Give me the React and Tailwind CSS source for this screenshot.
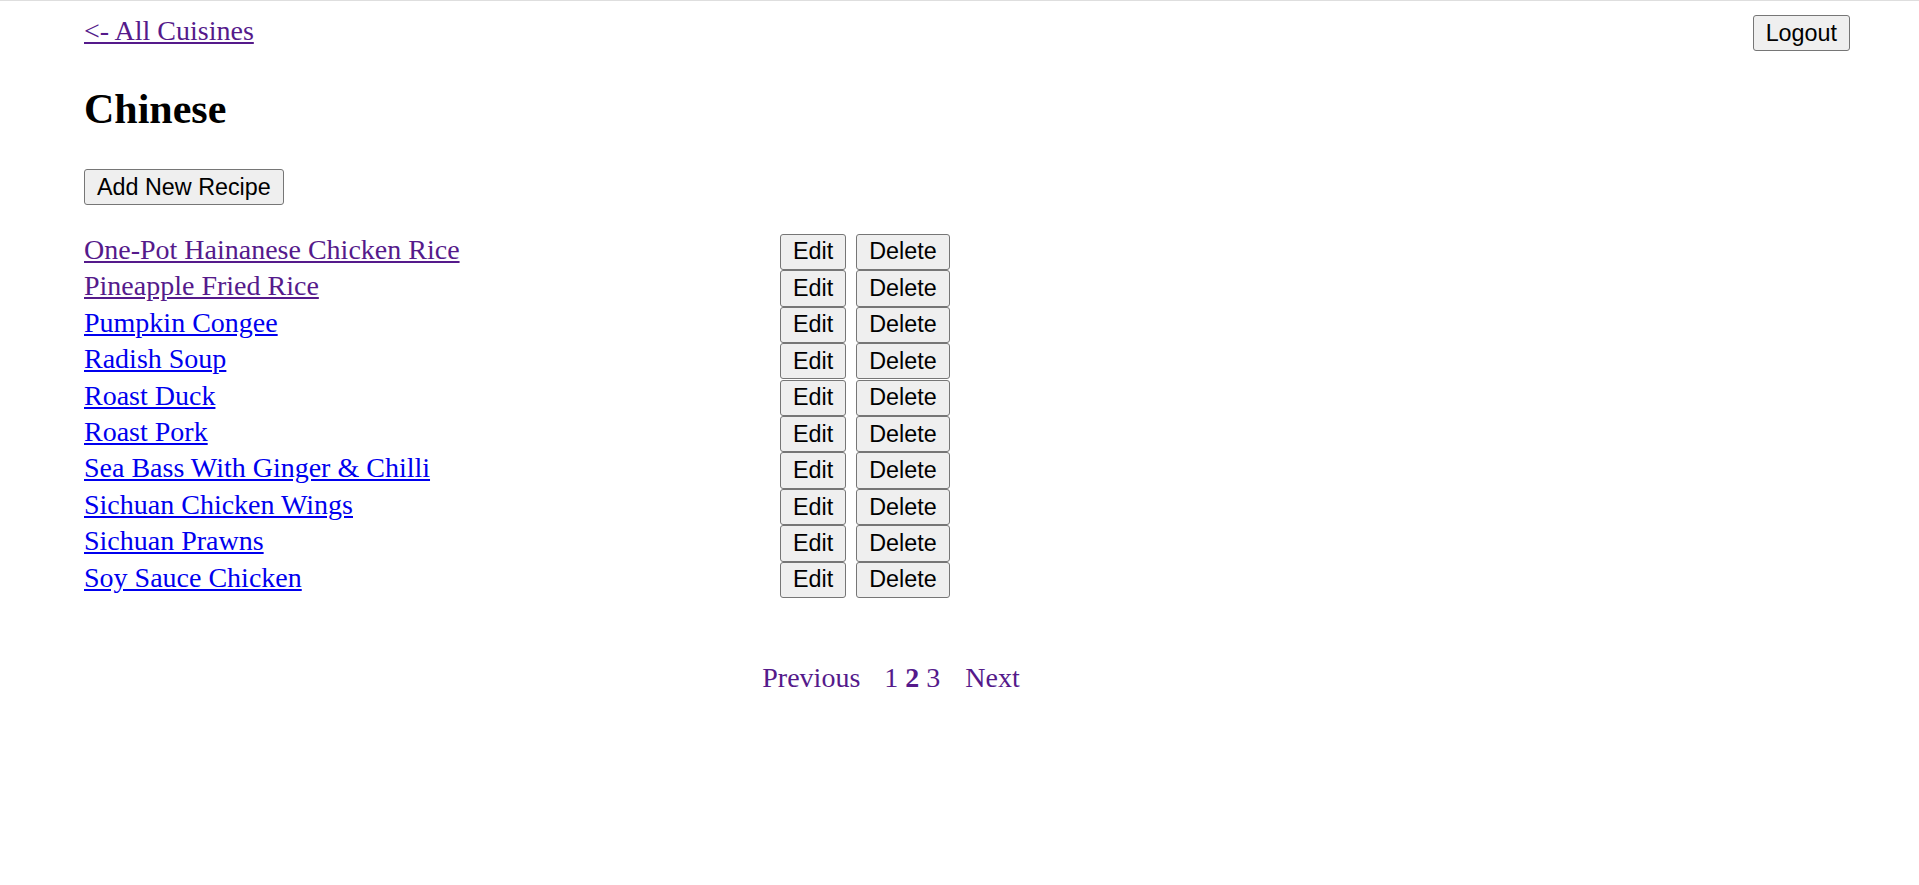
import React from "react";

const recipes = [
  { name: "One-Pot Hainanese Chicken Rice", visited: true },
  { name: "Pineapple Fried Rice", visited: true },
  { name: "Pumpkin Congee" },
  { name: "Radish Soup" },
  { name: "Roast Duck" },
  { name: "Roast Pork" },
  { name: "Sea Bass With Ginger & Chilli" },
  { name: "Sichuan Chicken Wings" },
  { name: "Sichuan Prawns" },
  { name: "Soy Sauce Chicken" },
];

function Btn({ children, className = "" }) {
  return (
    <button
      className={
        "h-[36.4px] px-[12px] bg-[#efefef] border border-[#767676] rounded-[3px] text-black text-[23.33px] leading-[27px] font-['Liberation_Sans',Arial,sans-serif] flex items-center justify-center whitespace-nowrap " +
        className
      }
    >
      {children}
    </button>
  );
}

export default function App() {
  return (
    <div className="min-h-[885px] w-full bg-white border-t border-[#dedede] font-['Liberation_Serif','Times_New_Roman',serif] text-black">
      <div className="flex justify-between items-start pl-[84px] pr-[69px] pt-[13.5px]">
        <a href="#" className="text-[28px] leading-[32px] text-[#551a8b] underline">
          {"<- All Cuisines"}
        </a>
        <Btn className="mt-[0.5px]">Logout</Btn>
      </div>

      <h2 className="pl-[84px] mt-[34px] text-[42px] leading-[48px] font-bold">Chinese</h2>

      <div className="pl-[84px] mt-[35.5px] flex">
        <Btn>Add New Recipe</Btn>
      </div>

      <div className="pl-[84px] mt-[28.5px] flex flex-col">
        {recipes.map((r) => (
          <div key={r.name} className="flex items-start h-[36.45px]">
            <div className="w-[696px]">
              <a
                href="#"
                className={
                  "text-[28px] leading-[32px] underline " +
                  (r.visited ? "text-[#551a8b]" : "text-[#0000ee]")
                }
              >
                {r.name}
              </a>
            </div>
            <div className="flex gap-[10px]">
              <Btn>Edit</Btn>
              <Btn className="px-[11px]">Delete</Btn>
            </div>
          </div>
        ))}
      </div>

      <div className="mt-[64px] pl-[84px] pr-[221px] flex justify-center text-[28px] leading-[32px] text-[#551a8b]">
        <a href="#" className="text-[#551a8b]">Previous</a>
        <span className="ml-[24px] mr-[25px] whitespace-pre">
          {"1 "}
          <b>2</b>
          {" 3"}
        </span>
        <a href="#" className="text-[#551a8b]">Next</a>
      </div>
    </div>
  );
}
